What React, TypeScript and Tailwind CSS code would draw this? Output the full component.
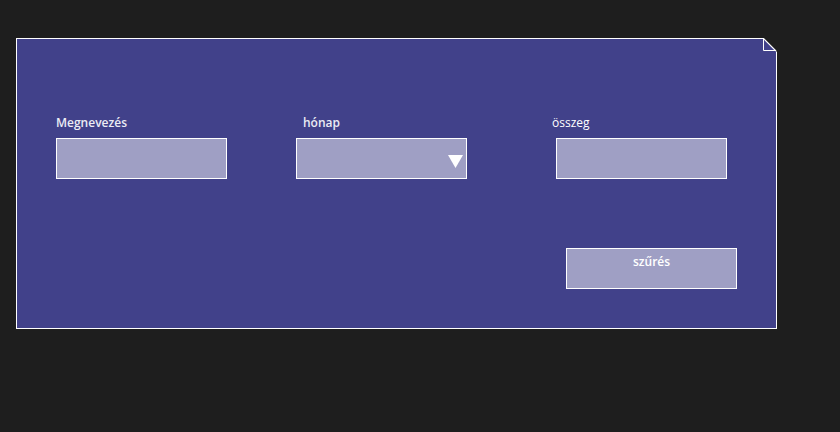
import { ChangeEvent, useState } from "react";

const fieldBox = "h-[41px] w-[171px] border border-white bg-[#9f9fc4]";

export default function App() {
    const [name, setName] = useState("");
    const [amount, setAmount] = useState("");

    return (
        <div className="min-h-[432px] w-full bg-[#1e1e1e] pt-[38px] pl-[16px] font-['Open_Sans',sans-serif]">
            <div className="relative h-[291px] w-[761px] border border-white bg-[#41418a]">
                {/* folded corner */}
                <svg className="absolute -right-px -top-px" width="14" height="14" viewBox="0 0 14 14">
                    <polygon points="0,0 14,0 14,14" fill="#1e1e1e" />
                    <polyline points="0.5,0 0.5,12.5 13,12.5" fill="none" stroke="white" strokeWidth="1" />
                    <line x1="0" y1="0" x2="13" y2="13" stroke="white" strokeWidth="1.2" />
                </svg>

                <div className="flex pt-[76px] pl-[39px] text-[12px] font-semibold text-[#ececf4]">
                    <div className="flex flex-col">
                        <label className="h-[16px] leading-[16px]">Megnevezés</label>
                        <input
                            value={name}
                            onChange={(e: ChangeEvent<HTMLInputElement>) => setName(e.target.value)}
                            className={`${fieldBox} mt-[7px] px-2 outline-none`}
                        />
                    </div>
                    <div className="ml-[69px] flex flex-col">
                        <label className="ml-[7px] h-[16px] leading-[16px]">hónap</label>
                        <div className={`${fieldBox} relative mt-[7px]`}>
                            <svg className="absolute right-[3px] top-[16px]" width="15" height="13" viewBox="0 0 15 13">
                                <polygon points="0,0 15,0 7.5,13" fill="white" />
                            </svg>
                        </div>
                    </div>
                    <div className="ml-[89px] flex flex-col">
                        <label className="-ml-[4px] h-[16px] leading-[16px] font-normal text-white">összeg</label>
                        <input
                            value={amount}
                            onChange={(e: ChangeEvent<HTMLInputElement>) => setAmount(e.target.value)}
                            className={`${fieldBox} mt-[7px] px-2 outline-none`}
                        />
                    </div>
                </div>

                <div className="flex justify-end pr-[39px] pt-[69px]">
                    <button className={`${fieldBox} flex justify-center pt-[5px] text-[12px] font-semibold leading-[16px] text-white`}>
                        szűrés
                    </button>
                </div>
            </div>
        </div>
    );
}
